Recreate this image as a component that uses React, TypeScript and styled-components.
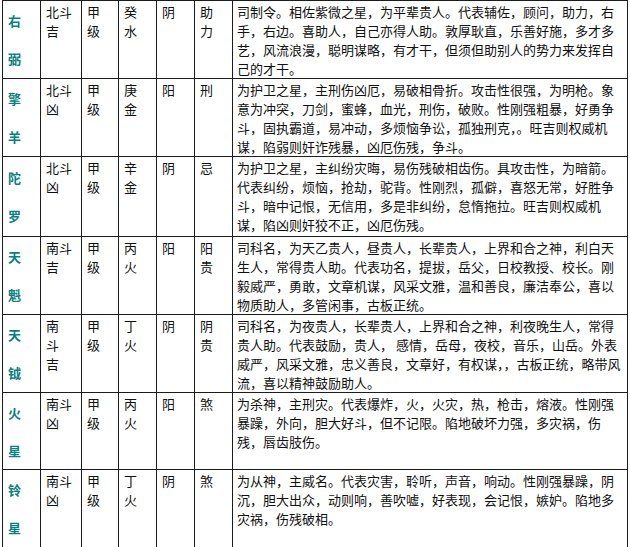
import styled, { createGlobalStyle } from 'styled-components';

const GlobalStyle = createGlobalStyle`
  html, body {
    margin: 0;
    padding: 0;
    background: #ffffff;
    overflow: hidden;
  }
  body {
    font-family: "Noto Sans CJK SC", "Noto Sans", sans-serif;
    font-size: 13px;
    color: #000000;
  }
`;

type Star = {
  name: [string, string];
  group: string[];
  level: string[];
  element: string[];
  yinYang: string;
  transform: string[];
  lines: string[];
  height: number;
};

const stars: Star[] = [
  {
    name: ['右', '弼'],
    group: ['北斗', '吉'],
    level: ['甲', '级'],
    element: ['癸', '水'],
    yinYang: '阴',
    transform: ['助', '力'],
    lines: [
      '司制令。相佐紫微之星，为平辈贵人。代表辅佐，顾问，助力，右',
      '手，右边。喜助人，自己亦得人助。敦厚耿直，乐善好施，多才多',
      '艺，风流浪漫，聪明谋略，有才干，但须但助别人的势力来发挥自',
      '己的才干。',
    ],
    height: 77,
  },
  {
    name: ['擎', '羊'],
    group: ['北斗', '凶'],
    level: ['甲', '级'],
    element: ['庚', '金'],
    yinYang: '阳',
    transform: ['刑'],
    lines: [
      '为护卫之星，主刑伤凶厄，易破相骨折。攻击性很强，为明枪。象',
      '意为冲突，刀剑，蜜蜂，血光，刑伤，破败。性刚强粗暴，好勇争',
      '斗，固执霸道，易冲动，多烦恼争讼，孤独刑克，。旺吉则权威机',
      '谋，陷弱则奸诈残暴，凶厄伤残，争斗。',
    ],
    height: 78,
  },
  {
    name: ['陀', '罗'],
    group: ['北斗', '凶'],
    level: ['甲', '级'],
    element: ['辛', '金'],
    yinYang: '阴',
    transform: ['忌'],
    lines: [
      '为护卫之星，主纠纷灾晦，易伤残破相齿伤。具攻击性，为暗箭。',
      '代表纠纷，烦恼，抢劫，驼背。性刚烈，孤僻，喜怒无常，好胜争',
      '斗，暗中记恨，无信用，多是非纠纷，怠惰拖拉。旺吉则权威机',
      '谋，陷凶则奸狡不正，凶厄伤残。',
    ],
    height: 80,
  },
  {
    name: ['天', '魁'],
    group: ['南斗', '吉'],
    level: ['甲', '级'],
    element: ['丙', '火'],
    yinYang: '阳',
    transform: ['阳', '贵'],
    lines: [
      '司科名，为天乙贵人，昼贵人，长辈贵人，上界和合之神，利白天',
      '生人，常得贵人助。代表功名，提拔，岳父，日校教授、校长。刚',
      '毅威严，勇敢，文章机谋，风采文雅，温和善良，廉洁奉公，喜以',
      '物质助人，多管闲事，古板正统。',
    ],
    height: 77,
  },
  {
    name: ['天', '钺'],
    group: ['南', '斗', '吉'],
    level: ['甲', '级'],
    element: ['丁', '火'],
    yinYang: '阴',
    transform: ['阴', '贵'],
    lines: [
      '司科名，为夜贵人，长辈贵人，上界和合之神，利夜晚生人，常得',
      '贵人助。代表鼓励，贵人， 感情，岳母，夜校，音乐，山岳。外表',
      '威严，风采文雅，忠义善良，文章好，有权谋，，古板正统，略带风',
      '流，喜以精神鼓励助人。',
    ],
    height: 76,
  },
  {
    name: ['火', '星'],
    group: ['南斗', '凶'],
    level: ['甲', '级'],
    element: ['丙', '火'],
    yinYang: '阳',
    transform: ['煞'],
    lines: [
      '为杀神，主刑灾。代表爆炸，火，火灾，热，枪击，熔液。性刚强',
      '暴躁，外向，胆大好斗，但不记限。陷地破坏力强，多灾祸，伤',
      '残，唇齿肢伤。',
    ],
    height: 77,
  },
  {
    name: ['铃', '星'],
    group: ['南斗', '凶'],
    level: ['甲', '级'],
    element: ['丁', '火'],
    yinYang: '阴',
    transform: ['煞'],
    lines: [
      '为从神，主威名。代表灾害，聆听，声音，响动。性刚强暴躁，阴',
      '沉，胆大出众，动则响，善吹嘘，好表现，会记恨，嫉妒。陷地多',
      '灾祸，伤残破相。',
    ],
    height: 78,
  },
];

function Lines({ parts }: { parts: string[] }) {
  return (
    <>
      {parts.map((p, i) => (
        <Line key={i}>{p}</Line>
      ))}
    </>
  );
}

export default function App() {
  return (
    <>
      <GlobalStyle />
      <Page>
        <StarTable>
          <colgroup>
            <col style={{ width: 38 }} />
            <col style={{ width: 41 }} />
            <col style={{ width: 37 }} />
            <col style={{ width: 38 }} />
            <col style={{ width: 38 }} />
            <col style={{ width: 38 }} />
            <col />
          </colgroup>
          <tbody>
            {stars.map((s) => (
              <Row key={s.name.join('')} $height={s.height}>
                <NameCell>
                  <Line>{s.name[0]}</Line>
                  <Line>&nbsp;</Line>
                  <Line>{s.name[1]}</Line>
                </NameCell>
                <Cell><Lines parts={s.group} /></Cell>
                <Cell><Lines parts={s.level} /></Cell>
                <Cell><Lines parts={s.element} /></Cell>
                <Cell><Line>{s.yinYang}</Line></Cell>
                <Cell><Lines parts={s.transform} /></Cell>
                <DescCell><Lines parts={s.lines} /></DescCell>
              </Row>
            ))}
            <Row $height={40}>
              <NameCell />
              <Cell />
              <Cell />
              <Cell />
              <Cell />
              <Cell />
              <DescCell />
            </Row>
          </tbody>
        </StarTable>
      </Page>
    </>
  );
}

const Page = styled.div`
  padding: 0 0 0 2px;
`;

const StarTable = styled.table`
  width: 626px;
  table-layout: fixed;
  border-collapse: collapse;
  border: 1px solid #1c1c1c;
`;

const Row = styled.tr<{ $height: number }>`
  height: ${(p) => p.$height}px;
`;

const Cell = styled.td`
  border: 1px solid #1c1c1c;
  padding: 1px 4px 0 5px;
  vertical-align: top;
  line-height: 19px;
  font-size: 13px;
  color: #111111;
`;

const NameCell = styled(Cell)`
  vertical-align: middle;
  padding: 0 4px 0 5px;
  color: #0b8080;
  font-weight: bold;
`;

const DescCell = styled(Cell)`
  white-space: nowrap;
  padding-left: 4px;
`;

const Line = styled.div`
  display: block;
`;
